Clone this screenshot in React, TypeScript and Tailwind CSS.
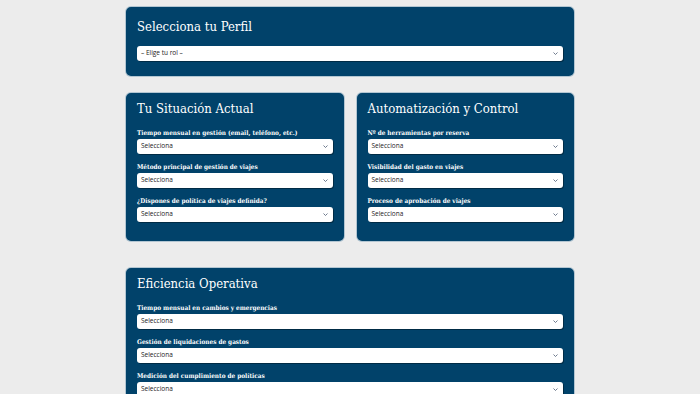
import React from "react";

const serif = "font-['DejaVu_Serif_Condensed','DejaVu_Serif',serif] [font-stretch:condensed]";

function Chevron() {
  return (
    <svg viewBox="0 0 10 6" className="w-[5px] h-[3px] text-[#4b5a72]" fill="none" stroke="currentColor" strokeWidth="1.6">
      <path d="M1 1l4 4 4-4" />
    </svg>
  );
}

function Select({ text = "Selecciona" }: { text?: string }) {
  return (
    <div className="h-[15px] w-full rounded-[3px] bg-white shadow-[1px_1px_0_rgba(0,0,0,0.35)] flex items-center justify-between pl-[4px] pr-[5px]">
      <span className="font-['Open_Sans',sans-serif] text-[6.5px] leading-none text-[#222]">{text}</span>
      <Chevron />
    </div>
  );
}

function Field({ label }: { label: string }) {
  return (
    <div className="flex flex-col">
      <label className={`${serif} font-bold text-[6.4px] leading-[10px] text-white mb-[1px]`}>{label}</label>
      <Select />
    </div>
  );
}

function Card({ title, fields }: { title: string; fields: string[] }) {
  return (
    <div className="rounded-[6px] bg-[#01426a] border border-white/70 px-[11px] pt-[7px] pb-[19px]">
      <h2 className={`${serif} text-[13px] leading-[18px] text-white mb-[10px]`}>{title}</h2>
      <div className="flex flex-col gap-[8px]">
        {fields.map((f) => (
          <Field key={f} label={f} />
        ))}
      </div>
    </div>
  );
}

export default function App() {
  return (
    <div className="min-h-screen bg-[#ececec] flex justify-center pt-[6px]">
      <div className="w-[450px] flex flex-col">
        <div className="rounded-[6px] bg-[#01426a] border border-white/70 px-[11px] pt-[11px] pb-[15px]">
          <h1 className={`${serif} text-[13px] leading-[18px] text-white mb-[10px]`}>Selecciona tu Perfil</h1>
          <Select text="– Elige tu rol –" />
        </div>
        <div className="grid grid-cols-2 gap-[11px] mt-[15px]">
          <Card
            title="Tu Situación Actual"
            fields={[
              "Tiempo mensual en gestión (email, teléfono, etc.)",
              "Método principal de gestión de viajes",
              "¿Dispones de política de viajes definida?",
            ]}
          />
          <Card
            title="Automatización y Control"
            fields={[
              "Nº de herramientas por reserva",
              "Visibilidad del gasto en viajes",
              "Proceso de aprobación de viajes",
            ]}
          />
        </div>
        <div className="mt-[25px]">
          <Card
            title="Eficiencia Operativa"
            fields={[
              "Tiempo mensual en cambios y emergencias",
              "Gestión de liquidaciones de gastos",
              "Medición del cumplimiento de políticas",
            ]}
          />
        </div>
      </div>
    </div>
  );
}
